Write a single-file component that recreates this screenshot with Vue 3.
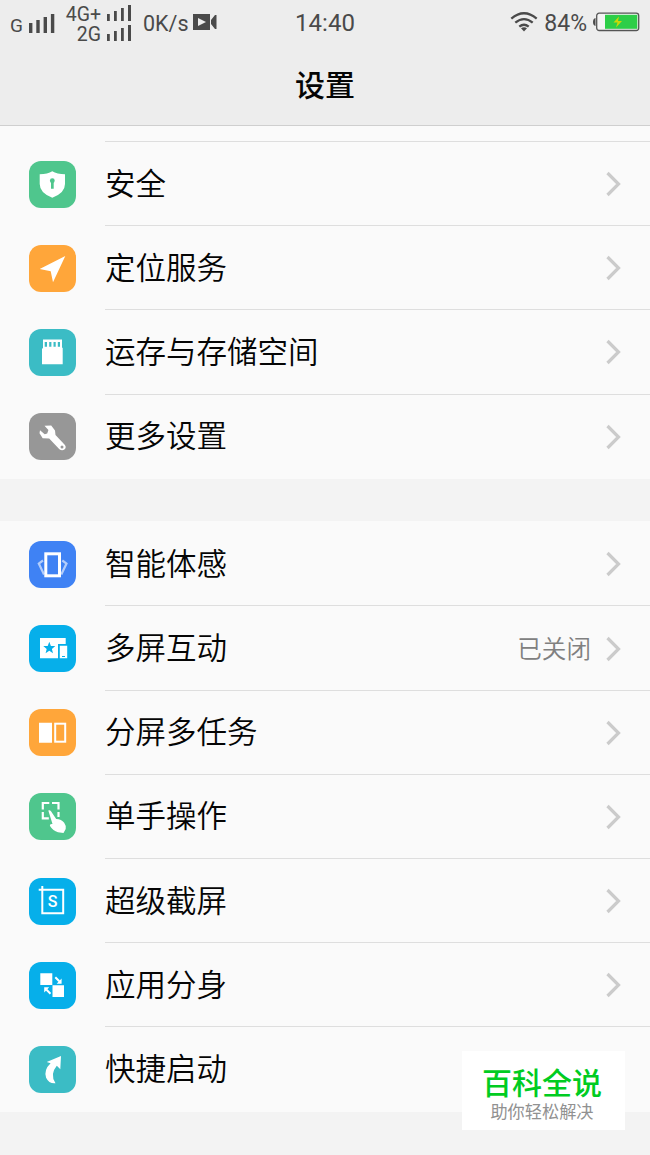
<script setup>
import {ref} from "vue";

const groups = ref([
  {
    continued: true,
    rows: [
      {icon: 'shield', color: '#4fc68d', label: '安全'},
      {icon: 'location', color: '#ffa63a', label: '定位服务'},
      {icon: 'storage', color: '#3bbcc5', label: '运存与存储空间'},
      {icon: 'wrench', color: '#979797', label: '更多设置'},
    ]
  },
  {
    continued: false,
    rows: [
      {icon: 'motion', color: '#3f82f4', label: '智能体感'},
      {icon: 'screens', color: '#06afea', label: '多屏互动', value: '已关闭'},
      {icon: 'split', color: '#ffa63a', label: '分屏多任务'},
      {icon: 'hand', color: '#4fc68d', label: '单手操作'},
      {icon: 'capture', color: '#06afea', label: '超级截屏'},
      {icon: 'clone', color: '#06afea', label: '应用分身'},
      {icon: 'shortcut', color: '#3bbcc5', label: '快捷启动'},
    ]
  },
])
</script>

<template>
  <div class="screen">

    <header class="header">
      <div class="status_bar">
        <div class="status_left">
          <span class="net">G</span>
          <svg class="bars_main" width="26" height="19" viewBox="0 0 26 19" fill="#4a4a4a">
            <path d="M0 9h3.400v10H0zM7.300 6h3.400v13H7.300zM14.600 3H18v16h-3.400zM21.900 0h3.400v19h-3.400z"/>
          </svg>
          <div class="sims">
            <div class="sim">
              <span>4G+</span>
              <svg width="25" height="16" viewBox="0 0 25 16" fill="#4a4a4a">
                <path d="M0 9h2.800v7H0zM7 6h2.800v10H7zM14 3h2.800v13H14zM21 0h3v16h-3z"/>
              </svg>
            </div>
            <div class="sim">
              <span>2G</span>
              <svg width="25" height="16" viewBox="0 0 25 16" fill="#4a4a4a">
                <path d="M0 9h2.800v7H0zM7 6h2.800v10H7zM14 3h2.800v13H14zM21 0h3v16h-3z"/>
              </svg>
            </div>
          </div>
          <span class="speed">0K/s</span>
          <svg class="camera" width="24" height="16" viewBox="0 0 24 16">
            <path d="M0 0h17v16H0zM18 6l4-5h1.500v14H22l-4-5z" fill="#4a4a4a"/>
            <path d="M5 4l8 4-8 4z" fill="#ededed"/>
          </svg>
        </div>

        <div class="clock">14:40</div>

        <div class="status_right">
          <svg width="28" height="20" viewBox="0 0 28 20" fill="none" stroke="#4a4a4a" stroke-width="2.300">
            <path d="M1.300 6.600Q14-4 26.700 6.600M5.300 10.700q8.700-7.200 17.400 0M9.300 14.700q4.700-3.800 9.400 0"/>
            <path d="M11 16.200q3-2 6 0L14 19.500z" fill="#4a4a4a" stroke="none"/>
          </svg>
          <span class="percent">84%</span>
          <svg width="47" height="20" viewBox="0 0 47 20">
            <path d="M2.500 6v8Q0 13.500 0 10t2.500-4z" fill="#4a4a4a"/>
            <rect x="3.700" y="1.200" width="42" height="17.300" rx="2.500" fill="#f4f4f4" stroke="#555" stroke-width="1.300"/>
            <rect x="12" y="2.800" width="32.300" height="14" fill="#2dce48"/>
            <path d="M26 4.500l-5.500 6h4l-1.500 5 6-6.500h-4z" fill="#c9d808"/>
          </svg>
        </div>
      </div>
      <h1 class="title">设置</h1>
    </header>

    <section v-for="(group, i) in groups" :key="i" class="group" :class="{continued: group.continued}">
      <div v-for="row in group.rows" :key="row.icon" class="row">
        <svg class="tile" :style="{backgroundColor: row.color}" viewBox="0 0 47 47" fill="#fff">

          <g v-if="row.icon === 'shield'">
            <path d="M23.300 10.300Q28 13.300 36 13.300V23q0 9-12.700 13.700Q10.700 32 10.700 23v-9.700q8 0 12.600-3z"/>
            <path d="M22 20h2.700v7.700H22z" :fill="row.color"/>
            <circle cx="23.300" cy="19.700" r="2.400" :fill="row.color"/>
          </g>

          <path v-else-if="row.icon === 'location'" d="M36.300 11L24 37.300l-2.300-11.100-11-2.200z"/>

          <g v-else-if="row.icon === 'storage'">
            <path d="M14 10.500h19v8.200h.7v16.600H13V20l1-1.300z"/>
            <path d="M15.700 13h2.300v4.700h-2.300zM20.200 13h2.200v4.700h-2.200zM24.500 13h2.200v4.700h-2.200zM28.800 13h2.200v4.700h-2.200z" :fill="row.color"/>
          </g>

          <g v-else-if="row.icon === 'wrench'">
            <path d="M11 17.300l4.700 3.900 2.500-.7 1.200-3.600-3.900-4.200 6.700-.2 3.800 5 .5 4.600L35.700 31.700q2 2.400 0 4.500-2.500 2.300-5.300 0L20.200 25.500l-6.500-.3-3.200-5z"/>
            <circle cx="33" cy="34" r="1.500" :fill="row.color"/>
          </g>

          <g v-else-if="row.icon === 'motion'" fill="none" stroke="#fff">
            <path d="M14 19.500l-4.200 3L15 33.500M33.300 19.500l4.200 3L32.300 33.500" stroke-width="2.200" opacity=".6"/>
            <rect x="16.800" y="12.800" width="13.700" height="22" stroke-width="3"/>
          </g>

          <g v-else-if="row.icon === 'screens'">
            <path d="M11 13h25.700v6H29v14.200H11z"/>
            <path d="M20.300 16.800l1.600 4.100 4.400.2-3.400 2.800 1.100 4.300-3.700-2.400-3.700 2.400 1.100-4.300-3.400-2.800 4.400-.2z" :fill="row.color"/>
            <path d="M30.800 20.700h7.400v12.500h-7.400z"/>
            <path d="M33 31h3v1h-3z" :fill="row.color"/>
          </g>

          <g v-else-if="row.icon === 'split'">
            <path d="M10 13.700h13v20H10z"/>
            <rect x="26.200" y="14.700" width="10" height="18" fill="none" stroke="#fff" stroke-width="2"/>
          </g>

          <g v-else-if="row.icon === 'hand'">
            <path d="M13.800 16.500V10h6.500M23 10h6.500v6.500M13.800 19v6.300h6M29.500 19v5" fill="none" stroke="#fff" stroke-width="2.200"/>
            <path d="M19.300 17.500q1.500-.8 2.700.8L27.200 26q5.300.3 8 3.800 2 2.700 1.500 6.200L34.500 40l-5.500-.8q-5-1.200-8-6.200-.6-2.300 2.500-2z"/>
          </g>

          <g v-else-if="row.icon === 'capture'">
            <path d="M9.700 11.700H34.200V35.300H13.300V8" fill="none" stroke="#fff" stroke-width="2"/>
            <text class="capture_letter" x="23.700" y="29.400" text-anchor="middle">S</text>
          </g>

          <g v-else-if="row.icon === 'clone'">
            <path d="M11.300 11.300h12V23h-12zM23.500 23.300H35V35H23.500z"/>
            <path d="M26.300 15.300l4 4M21.500 31.700l-4-4" stroke="#fff" stroke-width="2"/>
            <path d="M32.600 21.800v-5.200l-5 5.200zM15.200 25.200v5.200l5-5.200z"/>
          </g>

          <path v-else d="M32 10l-.7 13.300-3.500-3.500Q20.500 28.500 26.500 37.300q-6.500.7-9.400-5.500-2.600-7.800 4.500-14.500l-3.900-1.200z"/>
        </svg>

        <div class="row_body">
          <span class="label">{{ row.label }}</span>
          <span v-if="row.value" class="value">{{ row.value }}</span>
          <svg class="chevron" width="16" height="26" viewBox="0 0 16 26">
            <path d="M1.500 2l11 11-11 11" fill="none" stroke="#cbcbcb" stroke-width="3.200"/>
          </svg>
        </div>
      </div>
    </section>

    <div class="stamp">
      <div class="stamp_name">百科全说</div>
      <div class="stamp_text">助你轻松解决</div>
    </div>

  </div>
</template>

<style>
body {
  background-color: #f3f3f3;
}
</style>

<style scoped>
.screen {
  position: relative;
  width: 650px;
  height: 1155px;
  overflow: hidden;
  background-color: #f3f3f3;
  font-family: Roboto, "Noto Sans CJK SC", sans-serif;
  color: #050505;
}

.header {
  box-sizing: border-box;
  height: 126px;
  background-color: #ededed;
  border-bottom: 1px solid #cfcfcf;
}

.status_bar {
  display: grid;
  grid-template-columns: 1fr auto 1fr;
  height: 45px;
  color: #4a4a4a;
}

.status_left {
  display: flex;
  align-items: center;
  padding-left: 10px;
}

.net {
  width: 19px;
  font-size: 19px;
  line-height: 20px;
  margin-top: 5px;
}

.bars_main {
  margin-top: 1px;
}

.sims {
  width: 67px;
  margin-left: 10px;
  margin-top: 4px;
}

.sim {
  display: flex;
  justify-content: flex-end;
  align-items: center;
  gap: 6px;
  height: 20.500px;
  font-size: 19.500px;
  line-height: 18px;
}

.sim svg {
  margin-top: -4px;
}

.speed {
  margin-left: 11px;
  font-size: 21.500px;
}

.camera {
  margin-left: 4px;
  margin-top: -2px;
}

.clock {
  font-size: 24px;
  line-height: 46px;
}

.status_right {
  display: flex;
  align-items: center;
  justify-content: flex-end;
  padding-right: 10px;
  padding-bottom: 2px;
}

.percent {
  margin: 3px 6px 0;
  font-size: 23px;
}

.title {
  margin: 0;
  font-size: 30px;
  font-weight: 500;
  line-height: 82px;
  text-align: center;
}

.group {
  padding-bottom: 1px;
  margin-bottom: 42.500px;
  background-color: #fafafa;
}

.group.continued {
  padding-top: 15px;
}

.row {
  display: flex;
  height: 84.200px;
  padding-left: 29px;
}

.tile {
  flex: none;
  width: 47px;
  height: 47px;
  margin-top: 19.500px;
  border-radius: 12px;
}

.row_body {
  flex: 1;
  display: flex;
  align-items: center;
  box-sizing: border-box;
  margin-left: 29px;
  padding-right: 28px;
  border-top: 1px solid #dedede;
}

.group:not(.continued) .row:first-child .row_body {
  border-top-color: transparent;
}

.label {
  flex: 1;
  padding-top: 2px;
  font-size: 30.500px;
  font-weight: 350;
  line-height: 44px;
}

.value {
  margin-right: 15px;
  padding-bottom: 3px;
  font-size: 24.600px;
  font-weight: 350;
  color: #808080;
}

.chevron {
  margin-top: 1px;
}

.capture_letter {
  font-size: 16px;
  font-weight: 500;
}

.stamp {
  position: absolute;
  left: 462px;
  top: 1051px;
  width: 163px;
  height: 79px;
  box-sizing: border-box;
  padding-top: 16px;
  padding-right: 3px;
  background-color: #fff;
  text-align: center;
}

.stamp_name {
  font-size: 30px;
  font-weight: 500;
  line-height: 34px;
  color: #0c2;
}

.stamp_text {
  font-size: 17.200px;
  line-height: 23px;
  color: #919191;
}
</style>
